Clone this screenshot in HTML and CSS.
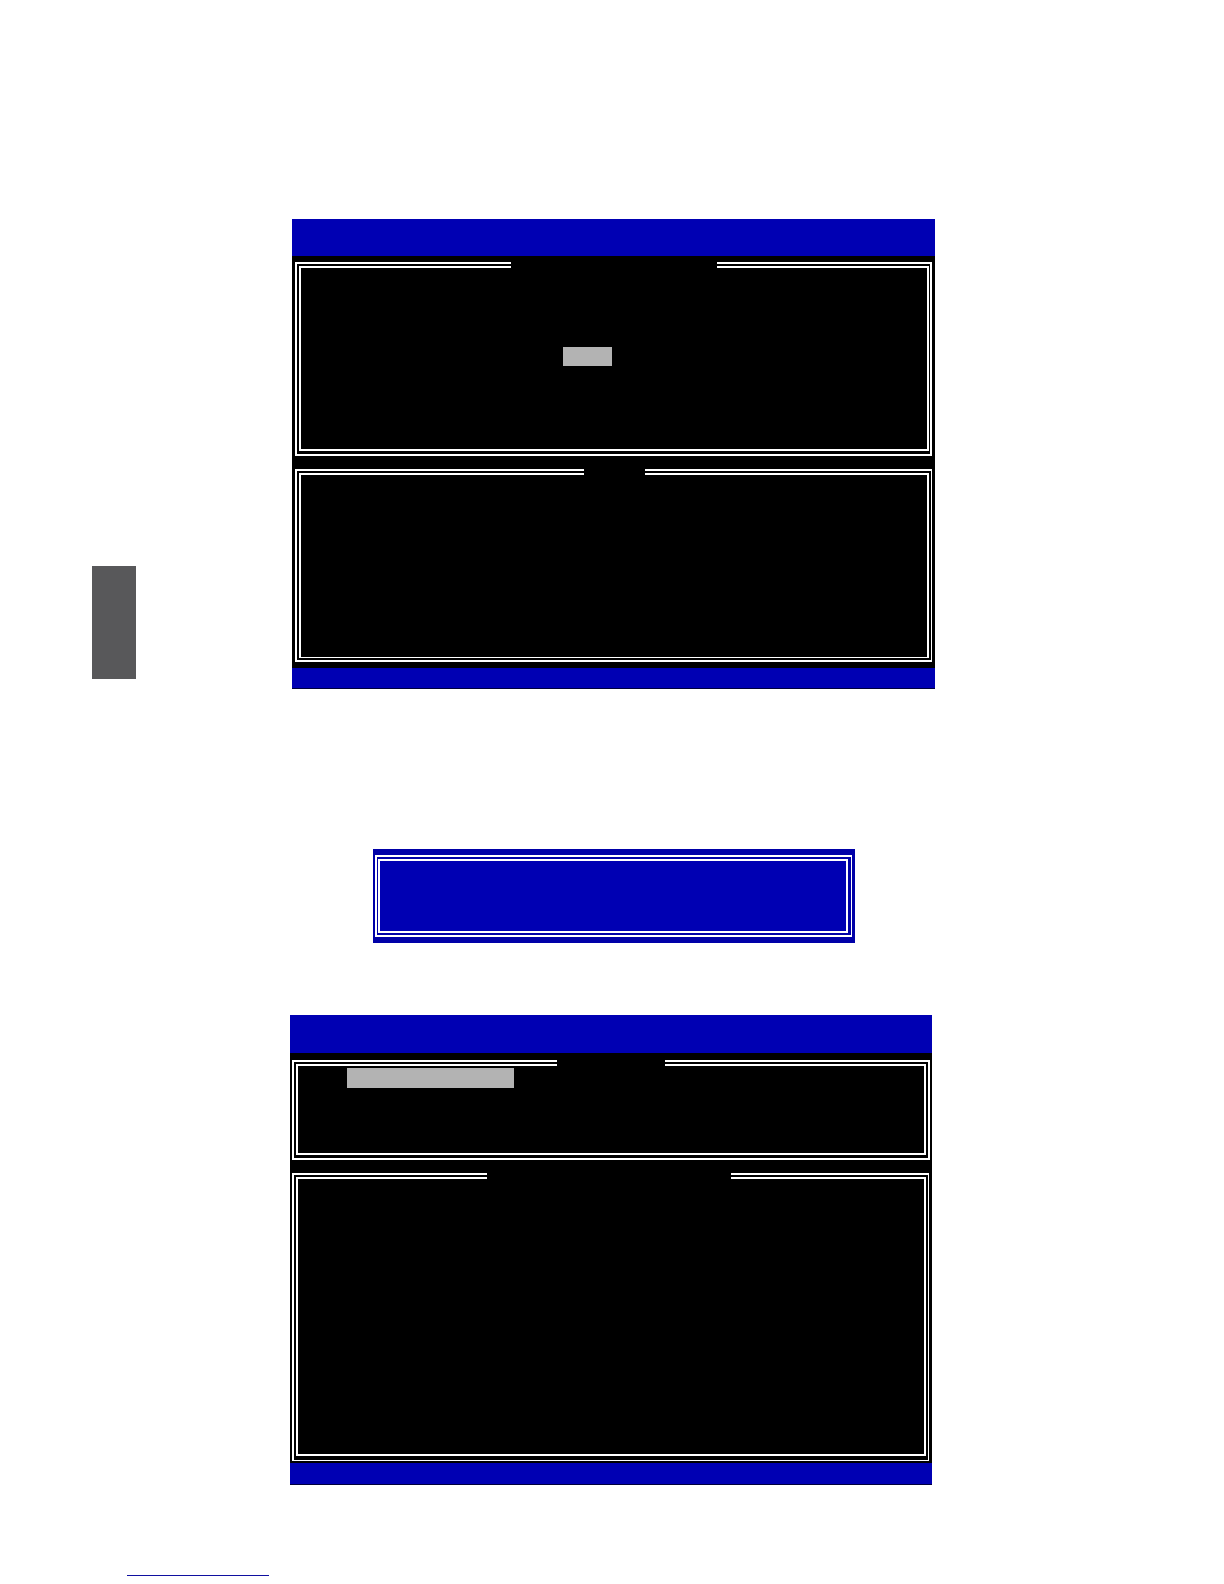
FILE: index.html
```
<!DOCTYPE html>
<html lang="en">
<head>
<meta charset="utf-8">
<title>Setup screens</title>
<link rel="stylesheet" href="styles.css">
</head>
<body>
<main class="page">
  <div class="row row-first">
    <aside class="tab"></aside>
    <section class="screen">
      <header class="bar"></header>
      <div class="panels">
        <div class="frame frame-main"><div class="inner"><div class="legend legend-main"></div><div class="mark mark-option"></div></div></div>
        <div class="frame frame-help"><div class="inner"><div class="legend legend-help"></div></div></div>
      </div>
      <footer class="foot"></footer>
    </section>
  </div>
  <div class="row row-dialog">
    <section class="dialog"><div class="frame frame-dialog"><div class="inner"></div></div></section>
  </div>
  <div class="row row-second">
    <section class="screen screen-second">
      <header class="bar"></header>
      <div class="panels">
        <div class="frame frame-menu"><div class="inner"><div class="legend legend-menu"></div><div class="mark mark-item"></div></div></div>
        <div class="frame frame-info"><div class="inner"><div class="legend legend-info"></div></div></div>
      </div>
      <footer class="foot"></footer>
    </section>
  </div>
  <div class="row row-line"><div class="line"></div></div>
</main>
</body>
</html>
```
FILE: styles.css
```
* { box-sizing: border-box; }

body {
  margin: 0;
  background: #fff;
  font-family: "Liberation Sans", sans-serif;
}

.page { padding: 219px 0 8px; }

.row { display: grid; }

.row-first { grid-template-columns: 92fr 44fr 156fr 643fr 289fr; }
.row-dialog { grid-template-columns: 373fr 482fr 369fr; margin-top: 160px; }
.row-second { grid-template-columns: 290fr 642fr 292fr; margin-top: 72px; }
.row-line { grid-template-columns: 127fr 142fr 955fr; margin-top: 90px; }

.tab {
  grid-column: 2;
  align-self: end;
  height: 113px;
  margin-bottom: 10px;
  background: #58585a;
}

.screen { grid-column: 4; background: #000; }
.row-second .screen { grid-column: 2; }

.bar { height: 37px; background: #0000b3; }

.foot {
  height: 21px;
  background: #0000b3;
  border-bottom: 1px solid #00003c;
}

.panels {
  display: flex;
  flex-direction: column;
  gap: 13px;
  padding: 6px 3px;
}

.frame { border: 2px solid #fff; padding: 2px; }
.inner { border: 2px solid #fff; }

.frame-main { padding: 2px 1px 3px 2px; }
.frame-main .inner { height: 185px; }

.frame-help { padding-right: 2px; border-right-width: 1px; }
.frame-help .inner { height: 185px; border-bottom-width: 1px; }

/* Black title gap that interrupts the double top border. */
.legend {
  height: 6px;
  margin: -6px auto 0;
  background: #000;
}

.legend-main { width: 206px; }
.legend-help { width: 61px; }
.legend-menu { width: 108px; }
.legend-info { width: 244px; }

.mark { background: #b3b3b3; }
.mark-option { width: 49px; height: 19px; margin: 79px 0 0 262px; }
.mark-item { width: 167px; height: 20px; margin: 2px 0 0 49px; }

.dialog {
  grid-column: 2;
  padding: 6px 3px 6px 2px;
  background: #0000a8;
}

.frame-dialog { border-right-width: 1px; padding: 2px 3px 2px 1px; }
.frame-dialog .inner { height: 74px; background: #0000b3; }

.screen-second .bar { height: 38px; }
.screen-second .foot { height: 22px; }
.screen-second .panels { padding: 7px 2px 2px; }
.frame-menu { padding-bottom: 3px; }
.frame-menu .inner { height: 91px; }

.frame-info {
  margin-right: 1px;
  padding-bottom: 4px;
  border-width: 2px 1px 1px 2px;
}

.frame-info .inner { height: 279px; padding-right: 4px; }

.line { grid-column: 2; height: 1px; background: #1010a0; }
```
